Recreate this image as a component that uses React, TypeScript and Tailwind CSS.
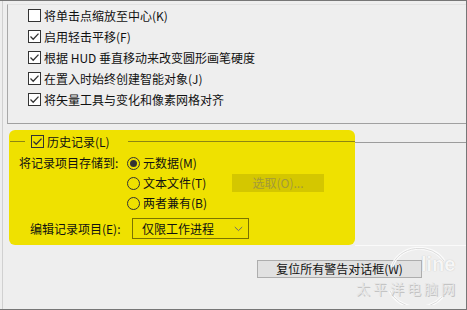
import type { ReactNode } from 'react'

const FONT = { fontFamily: '"Noto Sans CJK SC", "Noto Sans", sans-serif' }

function CheckBox({ checked, onYellow }: { checked: boolean; onYellow?: boolean }) {
  return (
    <div
      className={`flex h-[13px] w-[13px] shrink-0 items-center justify-center border border-[#333333] ${
        onYellow ? 'bg-transparent' : 'bg-white'
      }`}
    >
      {checked && (
        <svg width="11" height="11" viewBox="0 0 11 11">
          <path d="M1.5 5.5 L4.2 8.2 L9.5 2.6" fill="none" stroke="#333333" strokeWidth="1.3" />
        </svg>
      )}
    </div>
  )
}

function Radio({ checked }: { checked: boolean }) {
  return (
    <div className="flex h-[13px] w-[13px] shrink-0 items-center justify-center rounded-full border border-[#333333]">
      {checked && <div className="h-[7px] w-[7px] rounded-full bg-[#333333]" />}
    </div>
  )
}

function OptionRow({ checked, children }: { checked: boolean; children: ReactNode }) {
  return (
    <div className="flex h-[21px] items-center gap-[3px] pl-[20px]">
      <CheckBox checked={checked} />
      <span>{children}</span>
    </div>
  )
}

const OPTIONS = [
  { label: '将单击点缩放至中心(K)', checked: false },
  { label: '启用轻击平移(F)', checked: true },
  { label: '根据 HUD 垂直移动来改变圆形画笔硬度', checked: true },
  { label: '在置入时始终创建智能对象(J)', checked: true },
  { label: '将矢量工具与变化和像素网格对齐', checked: true },
]

export default function App() {
  return (
    <div
      className="relative h-[310px] w-[467px] overflow-hidden border-t border-r border-b border-[#767676] bg-[#eeeeee] text-[12px] leading-none text-[#111111]"
      style={FONT}
    >
      <div className="ml-[2px] flex h-full flex-col border-l border-[#d0d0d0]">
        {/* upper options group */}
        <div className="mt-[3px] ml-[4px] h-[120px] border-t border-l border-b border-t-[#e2e2e2] border-l-[#a8a8a8] border-b-[#a0a0a0]">
          {OPTIONS.map((o) => (
            <OptionRow key={o.label} checked={o.checked}>
              {o.label}
            </OptionRow>
          ))}
        </div>

        {/* history group */}
        <div className="mt-[6px] flex">
          <div className="ml-[6px] flex h-[115px] w-[346px] flex-col rounded-[6px] bg-[#efe100]">
            <div className="flex h-[23px] items-center">
              <div className="ml-[1px] h-px w-[15px] bg-[#8e8612]" />
              <div className="ml-[6px]">
                <CheckBox checked onYellow />
              </div>
              <span className="ml-[3px]">历史记录(L)</span>
              <div className="ml-[18px] h-px flex-1 bg-[#8e8612]" />
            </div>

            <div className="flex h-[20px] items-center pl-[10px]">
              <span className="w-[108px]">将记录项目存储到:</span>
              <div className="flex items-center gap-[3px]">
                <Radio checked />
                <span>元数据(M)</span>
              </div>
            </div>

            <div className="flex h-[20px] items-center pl-[118px]">
              <div className="flex w-[105px] items-center gap-[3px]">
                <Radio checked={false} />
                <span>文本文件(T)</span>
              </div>
              <div className="flex h-[18px] w-[92px] items-center justify-center bg-[#d4c700] text-[#a39a3a]">
                选取(O)...
              </div>
            </div>

            <div className="flex h-[20px] items-center pl-[118px]">
              <div className="flex items-center gap-[3px]">
                <Radio checked={false} />
                <span>两者兼有(B)</span>
              </div>
            </div>

            <div className="mt-[5px] flex h-[21px] items-center pl-[21px]">
              <span className="w-[102px]">编辑记录项目(E):</span>
              <div className="flex h-[21px] w-[117px] items-center justify-between border border-[#7b7300] pr-[5px] pl-[9px]">
                <span>仅限工作进程</span>
                <svg width="9" height="6" viewBox="0 0 9 6">
                  <path d="M0.8 1 L4.5 4.6 L8.2 1" fill="none" stroke="#6a6a6a" strokeWidth="1" />
                </svg>
              </div>
            </div>
          </div>
          <div className="mt-[12px] h-[104px] flex-1 border-t border-b border-t-[#9c9c9c] border-b-[#fafafa]" />
        </div>

        <div className="mt-[14px] ml-[254px] flex h-[18px] w-[165px] items-center justify-center border border-[#adadad] bg-[#e1e1e1]">
          复位所有警告对话框(W)
        </div>
      </div>

      {/* pconline watermark */}
      <div className="pointer-events-none absolute left-[352px] top-[246px] h-[58px] w-[112px]">
        <svg className="absolute left-[30px] top-0" width="72" height="58" viewBox="0 0 72 58">
          <path d="M10 20 A28 24 0 0 1 62 14" fill="none" stroke="#fbfbfb" strokeWidth="3" />
          <path d="M10 20 A28 24 0 0 1 62 14" fill="none" stroke="#dcdcdc" strokeWidth="1" />
          <path d="M8 44 A30 26 0 0 0 60 50" fill="none" stroke="#fbfbfb" strokeWidth="3" />
          <path d="M8 44 A30 26 0 0 0 60 50" fill="none" stroke="#dcdcdc" strokeWidth="1" />
        </svg>
        <span
          className="absolute left-[69px] top-[7px] whitespace-nowrap text-[20px] font-bold leading-none text-[#f6f6f6]"
          style={{ fontFamily: '"Liberation Sans", Arial, sans-serif', textShadow: '0 0 1px #b8b8b8' }}
        >
          line
        </span>
        <span
          className="absolute left-[4px] top-[34px] whitespace-nowrap text-[14px] leading-none tracking-[3px] text-[#e6e6e6]"
          style={{ textShadow: '1px 1px 0 #c4c4c4' }}
        >
          太平洋电脑网
        </span>
      </div>
    </div>
  )
}
